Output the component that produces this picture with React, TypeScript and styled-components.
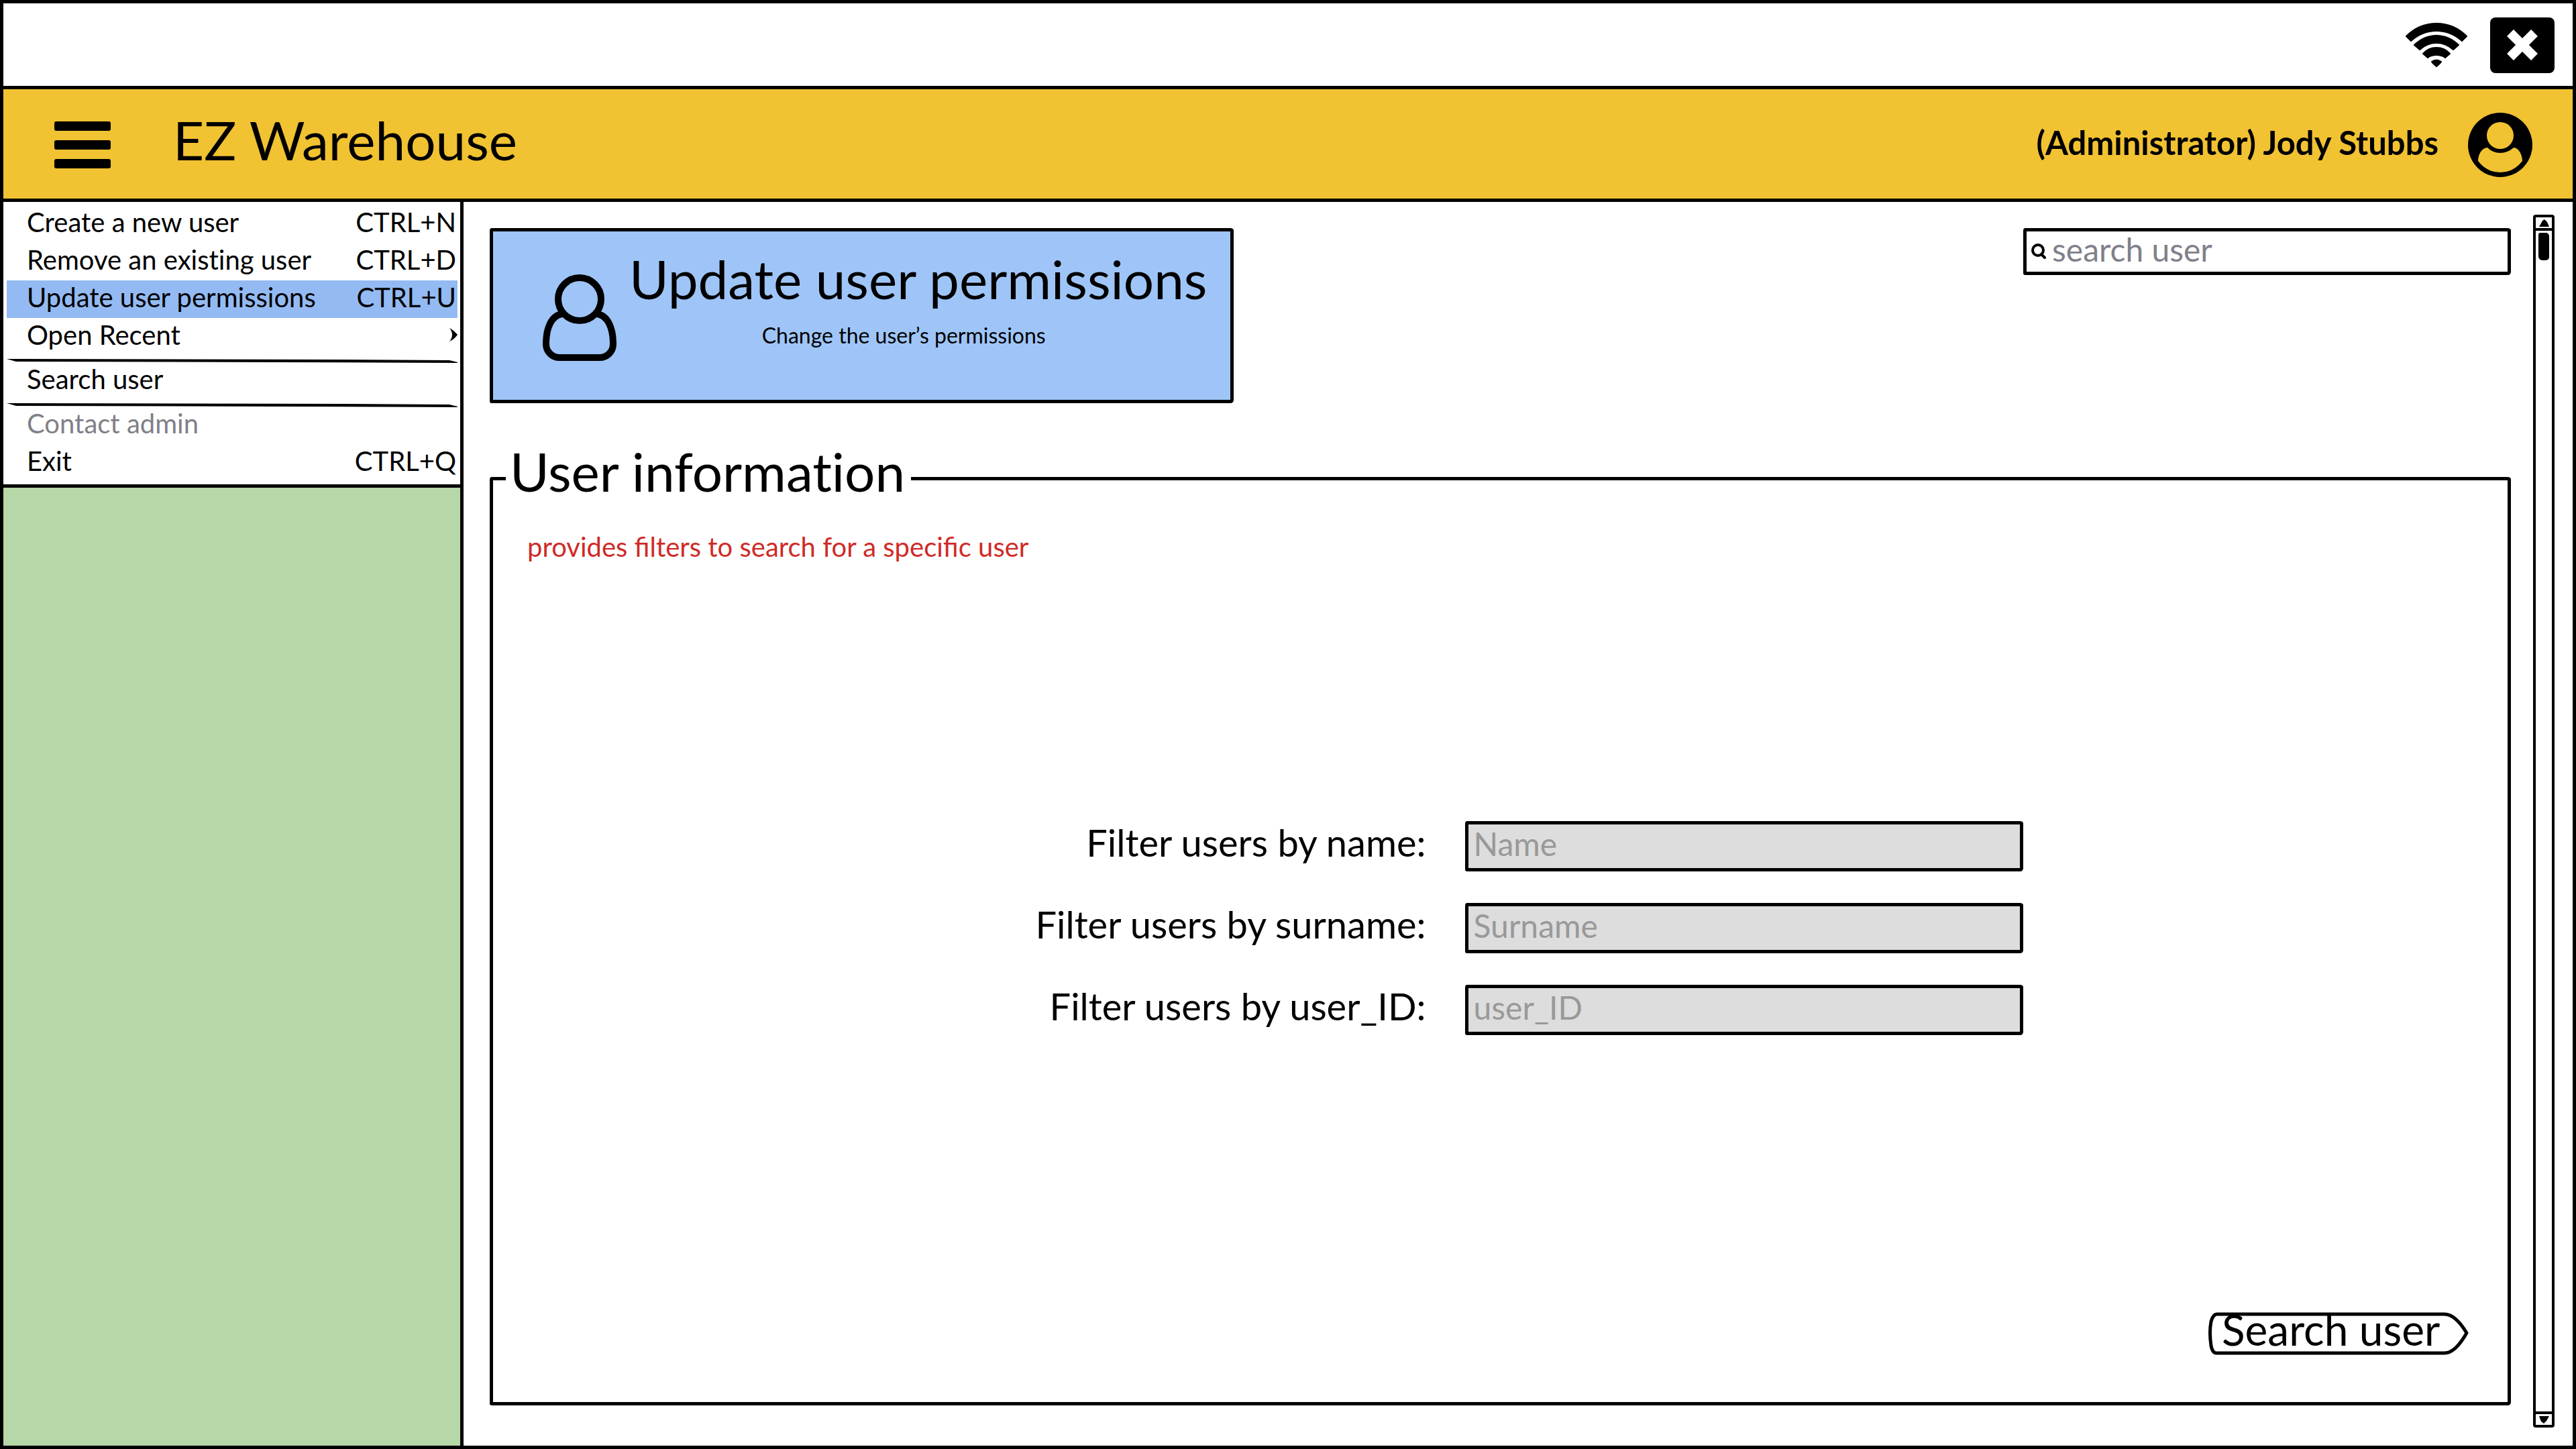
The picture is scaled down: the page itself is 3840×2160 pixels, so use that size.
import React from "react";
import styled, { createGlobalStyle } from "styled-components";

const ink = "#000";
const line = `5px solid ${ink}`;
const sketch = "3px 5px 4px 3px / 4px 3px 5px 3px";

const GlobalStyle = createGlobalStyle`
  *, *::before, *::after { box-sizing: border-box; }
  body {
    margin: 0;
    background: #fff;
    color: ${ink};
    font-family: Lato, "Open Sans", sans-serif;
  }
  button, input { font: inherit; color: inherit; }
  button { background: none; border: 0; padding: 0; cursor: pointer; }
  svg { display: block; flex: none; }
`;

const Frame = styled.div`
  min-height: 100vh;
  display: flex;
  flex-direction: column;
  border: ${line};
`;

const SystemBar = styled.div`
  height: 128px;
  padding: 4px 27px 0 0;
  border-bottom: ${line};
  display: flex;
  align-items: center;
  justify-content: flex-end;
  gap: 34px;
  svg { margin-bottom: 2px; }
`;

const AppHeader = styled.header`
  height: 168px;
  padding: 3px 59px 0 76px;
  border-bottom: ${line};
  background: #f1c232;
  display: flex;
  align-items: center;
`;

const IconButton = styled.button`
  display: block;
`;

const AppTitle = styled.h1`
  margin: 0 auto 0 93px;
  padding-bottom: 16px;
  font-size: 80px;
  line-height: 96px;
  font-weight: 400;
`;

const UserName = styled.span`
  margin-right: 44px;
  padding-bottom: 8px;
  font-size: 49px;
  line-height: 60px;
  font-weight: 700;
`;

const Body = styled.div`
  flex: 1;
  display: grid;
  grid-template-columns: 686px 1fr;
`;

const Sidebar = styled.aside`
  background: #b6d7a8;
  border-right: ${line};
`;

const Menu = styled.ul`
  list-style: none;
  margin: 0;
  padding: 5px 4px 4px 5px;
  background: #fff;
  border-bottom: ${line};
`;

const MenuItem = styled.button<{ $active?: boolean; $submenu?: boolean }>`
  width: 100%;
  height: 56px;
  padding: 0 ${(p) => (p.$submenu ? 0 : 2)}px 6px 30px;
  display: flex;
  align-items: center;
  justify-content: space-between;
  font-size: 40px;
  line-height: 48px;
  font-variant-ligatures: none;
  text-align: left;
  background: ${(p) => (p.$active ? "#94baf3" : "transparent")};
  &:disabled { color: #808089; cursor: default; }
`;

const Separator = styled.li`
  height: 10px;
  padding-top: 5px;
`;

const Main = styled.main`
  display: flex;
  gap: 33px;
  padding: 0 27px 0 39px;
`;

const Content = styled.div`
  flex: 1;
  display: flex;
  flex-direction: column;
  padding: 39px 0 60px;
`;

const TopRow = styled.div`
  display: flex;
  align-items: flex-start;
  justify-content: space-between;
`;

const Banner = styled.section`
  min-height: 261px;
  padding: 22px 35px 0 74px;
  background: #9fc5f8;
  border: ${line};
  border-radius: ${sketch};
  display: flex;
  align-items: flex-start;
  gap: 19px;
  svg { margin-top: 42px; }
`;

const BannerTitle = styled.h2`
  margin: 0;
  font-size: 80px;
  line-height: 96px;
  font-weight: 400;
`;

const BannerNote = styled.p`
  margin: 0;
  padding: 17px 43px 0 0;
  font-size: 32px;
  line-height: 40px;
  text-align: center;
`;

const SearchBox = styled.label`
  width: 727px;
  height: 70px;
  padding-left: 7px;
  border: ${line};
  border-radius: ${sketch};
  display: flex;
  align-items: center;
  gap: 8px;
`;

const SearchInput = styled.input`
  flex: 1;
  min-width: 0;
  height: 60px;
  padding: 0 0 8px;
  border: 0;
  outline: 0;
  background: transparent;
  font-size: 48px;
  &::placeholder { color: #808089; opacity: 1; }
`;

const Panel = styled.fieldset`
  flex: 1;
  min-width: 0;
  margin: 61px 0 0;
  padding: 0 58px 70px 19px;
  border: ${line};
  border-radius: ${sketch};
  display: flex;
  flex-direction: column;
`;

const PanelTitle = styled.legend`
  padding: 0 9px 22px 6px;
  font-size: 80px;
  line-height: 80px;
  font-variant-ligatures: none;
`;

const Hint = styled.p`
  margin: 0;
  padding: 27px 0 0 32px;
  font-size: 40px;
  line-height: 48px;
  color: #cf2a27;
`;

const Filters = styled.div`
  flex: 1;
  display: grid;
  grid-template-columns: auto 832px;
  align-content: center;
  justify-content: center;
  gap: 47px 58px;
  padding: 0 0 28px 125px;
`;

const FilterLabel = styled.label`
  padding-bottom: 12px;
  font-size: 56px;
  line-height: 63px;
  text-align: right;
`;

const FilterInput = styled.input`
  width: 100%;
  height: 75px;
  padding: 0 8px 8px;
  border: ${line};
  border-radius: ${sketch};
  outline: 0;
  background: #ddd;
  font-size: 48px;
  &::placeholder { color: #999; opacity: 1; }
`;

const SubmitButton = styled.button`
  position: relative;
  align-self: flex-end;
  width: 388px;
  height: 64px;
  padding: 0 43px 12px 20px;
  font-size: 64px;
  line-height: 52px;
  white-space: nowrap;
  svg { position: absolute; inset: 0; }
`;

const ScrollBar = styled.div`
  width: 32px;
  margin: 19px 0 27px;
  border: 4px solid ${ink};
  border-radius: 4px;
  display: flex;
  flex-direction: column;
`;

const ScrollTrack = styled.div`
  flex: 1;
  padding: 3px 4px;
  border: solid ${ink};
  border-width: 4px 0;
`;

const ScrollThumb = styled.div`
  height: 41px;
  border-radius: 3px 5px 5px 6px;
  background: ${ink};
`;

const ScrollArrow = styled.button`
  height: 16px;
  display: flex;
  align-items: center;
  justify-content: center;
`;

const menu = [
  { label: "Create a new user", keys: "CTRL+N" },
  { label: "Remove an existing user", keys: "CTRL+D" },
  { label: "Update user permissions", keys: "CTRL+U", active: true },
  { label: "Open Recent", submenu: true },
  { divider: true },
  { label: "Search user" },
  { divider: true },
  { label: "Contact admin", disabled: true },
  { label: "Exit", keys: "CTRL+Q" },
];

const filters = [
  { id: "name", label: "Filter users by name:", placeholder: "Name" },
  { id: "surname", label: "Filter users by surname:", placeholder: "Surname" },
  { id: "user-id", label: "Filter users by user_ID:", placeholder: "user_ID" },
];

const WifiIcon = () => (
  <svg width="92" height="68" viewBox="0 0 92 68" stroke={ink} strokeWidth="2" strokeLinejoin="round" aria-label="Wi-Fi">
    <path d="M1 20Q20 1 46 1T91 20L84 27Q67 12 46 12T8 27Z" />
    <path d="M13 33Q28 19 46 19T79 33L71 40Q60 30 46 30T21 40Z" />
    <path d="M26 46Q34 37 46 37T66 46L59 52Q54 48 46 48T33 52Z" />
    <path d="M39 58Q46 53 53 58Q52 60 46 65Q40 60 39 58Z" />
  </svg>
);

const CloseIcon = () => (
  <svg width="96" height="83" viewBox="0 0 96 83">
    <rect width="96" height="83" rx="8" />
    <path d="M30 23L66 59M66 23L30 59" stroke="#fff" strokeWidth="14" />
  </svg>
);

const MenuIcon = () => (
  <svg width="84" height="70" viewBox="0 0 84 70">
    <rect width="84" height="14" rx="3" />
    <rect y="28" width="84" height="14" rx="3" />
    <rect y="56" width="84" height="14" rx="3" />
  </svg>
);

const AvatarIcon = () => (
  <svg width="97" height="97" viewBox="0 0 97 97">
    <circle cx="48" cy="48" r="48" />
    <circle cx="48" cy="34" r="20" fill="#f1c232" />
    <path d="M29 52Q37 60 48 60T68 52C75 52 81 62 81 72Q68 89 48 89T15 72C15 62 21 52 29 52Z" fill="#f1c232" />
  </svg>
);

const PersonIcon = () => (
  <svg width="110" height="129" viewBox="0 0 110 129" fill="none" stroke={ink} strokeWidth="10">
    <circle cx="55" cy="37" r="32" />
    <path d="M29 59C13 61 5 80 5 104C5 115 14 124 25 124H85C96 124 105 115 105 104C105 80 97 61 81 59" />
  </svg>
);

const SearchIcon = () => (
  <svg width="23" height="24" viewBox="0 0 23 24" fill="none" stroke={ink} strokeWidth="4" strokeLinecap="round">
    <circle cx="10" cy="10" r="8" />
    <path d="M15 16L20 21" />
  </svg>
);

const Chevron = () => (
  <svg width="13" height="20" viewBox="0 0 13 20">
    <path d="M1 0Q7 3 13 10Q8 17 1 20Q5 15 5 10T1 0Z" />
  </svg>
);

export default function App() {
  return (
    <>
      <GlobalStyle />
      <Frame>
        <SystemBar>
          <WifiIcon />
          <IconButton aria-label="Close"><CloseIcon /></IconButton>
        </SystemBar>
        <AppHeader>
          <IconButton aria-label="Menu"><MenuIcon /></IconButton>
          <AppTitle>EZ Warehouse</AppTitle>
          <UserName>(Administrator) Jody Stubbs</UserName>
          <IconButton aria-label="Account"><AvatarIcon /></IconButton>
        </AppHeader>
        <Body>
          <Sidebar>
            <Menu>
              {menu.map((m, i) =>
                m.divider ? (
                  <Separator key={i} role="separator">
                    <svg width="100%" height="7" viewBox="0 0 672 7" preserveAspectRatio="none">
                      <path d="M0 0L500 1L660 2L672 5V6L400 5L14 4Z" />
                    </svg>
                  </Separator>
                ) : (
                  <li key={i}>
                    <MenuItem $active={m.active} $submenu={m.submenu} disabled={m.disabled}>
                      <span>{m.label}</span>
                      {m.keys && <span>{m.keys}</span>}
                      {m.submenu && <Chevron />}
                    </MenuItem>
                  </li>
                )
              )}
            </Menu>
          </Sidebar>
          <Main>
            <Content>
              <TopRow>
                <Banner>
                  <PersonIcon />
                  <div>
                    <BannerTitle>Update user permissions</BannerTitle>
                    <BannerNote>Change the user’s permissions</BannerNote>
                  </div>
                </Banner>
                <SearchBox>
                  <SearchIcon />
                  <SearchInput type="text" placeholder="search user" aria-label="search user" />
                </SearchBox>
              </TopRow>
              <Panel>
                <PanelTitle>User information</PanelTitle>
                <Hint>provides filters to search for a specific user</Hint>
                <Filters>
                  {filters.map((f) => (
                    <React.Fragment key={f.id}>
                      <FilterLabel htmlFor={f.id}>{f.label}</FilterLabel>
                      <FilterInput id={f.id} type="text" placeholder={f.placeholder} />
                    </React.Fragment>
                  ))}
                </Filters>
                <SubmitButton type="button">
                  <svg width="388" height="64" viewBox="0 0 388 64" fill="none" stroke={ink} strokeWidth="5" strokeLinejoin="round">
                    <path d="M13 3H352Q368 3 385 31Q368 61 352 61H12Q6 61 4 50Q1 30 4 14Q7 3 13 3Z" />
                  </svg>
                  Search user
                </SubmitButton>
              </Panel>
            </Content>
            <ScrollBar>
              <ScrollArrow aria-label="Scroll up">
                <svg width="15" height="11" viewBox="0 0 15 11"><path d="M0 11L5 2L8 0L12 4L15 11Z" /></svg>
              </ScrollArrow>
              <ScrollTrack><ScrollThumb /></ScrollTrack>
              <ScrollArrow aria-label="Scroll down">
                <svg width="15" height="11" viewBox="0 0 15 11"><path d="M0 0H15L11 7L7 11L3 8Z" /></svg>
              </ScrollArrow>
            </ScrollBar>
          </Main>
        </Body>
      </Frame>
    </>
  );
}
